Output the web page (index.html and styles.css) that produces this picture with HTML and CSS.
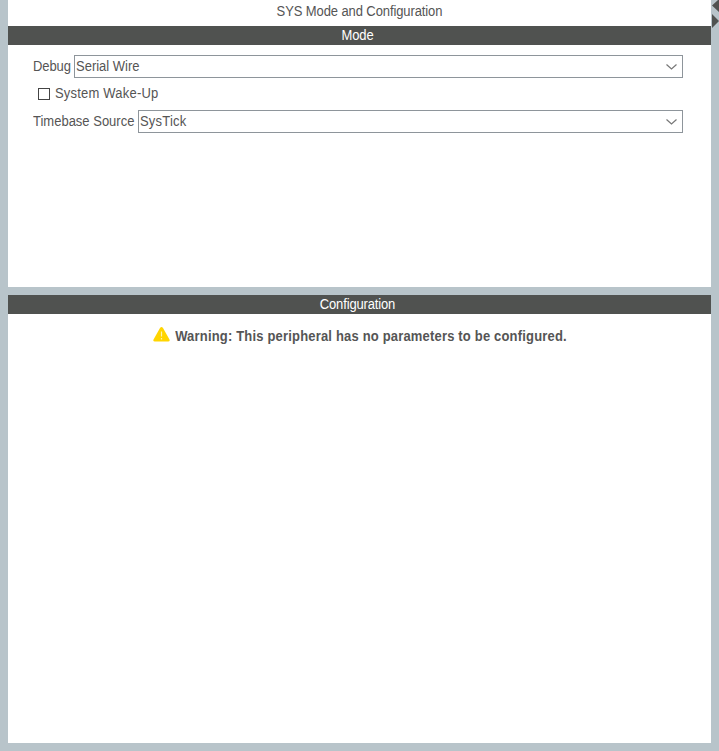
FILE: index.html
```html
<!DOCTYPE html>
<html lang="en">
<head>
<meta charset="utf-8">
<title>SYS Mode and Configuration</title>
<link rel="stylesheet" href="styles.css">
</head>
<body>
<main class="split">
  <section class="pane pane-mode">
    <h1 class="title"><span class="text t-title">SYS Mode and Configuration</span></h1>
    <h2 class="bar"><span class="text t-mode">Mode</span></h2>
    <div class="form">
      <div class="row">
        <span class="text label t-debug">Debug</span>
        <div class="select"><span class="text">Serial Wire</span>
          <svg class="chevron" width="11" height="6" viewBox="0 0 11 6"><path d="M.5 .5 5.500 5 10.500 .5"/></svg>
        </div>
      </div>
      <div class="row check">
        <span class="box"></span><span class="text t-wake">System Wake-Up</span>
      </div>
      <div class="row">
        <span class="text label t-time">Timebase Source</span>
        <div class="select"><span class="text t-tick">SysTick</span>
          <svg class="chevron" width="11" height="6" viewBox="0 0 11 6"><path d="M.5 .5 5.500 5 10.500 .5"/></svg>
        </div>
      </div>
    </div>
  </section>
  <section class="pane pane-config">
    <h2 class="bar"><span class="text t-config">Configuration</span></h2>
    <p class="warning">
      <svg width="17" height="15" viewBox="0 0 17 15"><path d="M7 1Q8.500-.8 10 1L16.500 12.500Q17 14.500 15.200 14.500H1.800Q0 14.500.5 12.500Z" fill="#ffd500"/><path d="M8.500 4.500V9.500M8.500 11V12.500" stroke="#fff3b0" stroke-width="1.200"/></svg>
      <span class="text t-warn">Warning: This peripheral has no parameters to be configured.</span>
    </p>
  </section>
</main>
<svg class="collapse" width="7" height="28" viewBox="0 0 7 28"><path d="M0 5.500 6 0H7V12ZM0 14V28L7 21Z" fill="#505250"/></svg>
</body>
</html>
```

FILE: styles.css
```css
* { box-sizing: border-box; }
body {
  margin: 0;
  height: 751px;
  overflow: hidden;
  background: #b8c4ca;
  color: #555;
  font: 13px/19px "Liberation Sans", Arial, sans-serif;
}
h1, h2, p { margin: 0; font-size: inherit; font-weight: normal; }
.split {
  height: 743px;
  margin: 0 8px;
  display: flex;
  flex-direction: column;
  gap: 8px;
}
.pane { background: #fff; }
.pane-mode { height: 287px; }
.pane-config { flex: 1; }
.title { height: 26px; padding-top: 2px; text-align: center; }
.bar {
  height: 19px;
  padding-right: 4px;
  background: #505250;
  color: #fff;
  text-align: center;
}
.form {
  padding: 10px 28px 0 25px;
  display: flex;
  flex-direction: column;
}
.row { height: 23px; display: flex; align-items: center; }
.text { display: inline-block; transform: scaleY(1.07); }
.label { flex: none; white-space: nowrap; }
.t-title { letter-spacing: -.1px; }
.t-mode { letter-spacing: -.1px; }
.t-debug { width: 41px; letter-spacing: -.1px; }
.t-wake { letter-spacing: .2px; }
.t-time { width: 105px; }
.t-tick { letter-spacing: .2px; }
.t-config { letter-spacing: -.15px; }
.t-warn { letter-spacing: .18px; }
.select {
  flex: 1;
  height: 23px;
  padding: 0 5px 0 1px;
  border: 1px solid #8e959b;
  display: flex;
  align-items: center;
  justify-content: space-between;
}
.chevron path { fill: none; stroke: #777; stroke-width: 1.200; }
.check { height: 32px; padding: 0 0 1px 5px; gap: 5px; }
.box { width: 12px; height: 12px; border: 1px solid #444; }
.warning {
  padding: 13px 0 0 1px;
  display: flex;
  justify-content: center;
  gap: 5px;
  font-weight: bold;
}
.collapse { position: absolute; right: 0; top: 0; }
```
